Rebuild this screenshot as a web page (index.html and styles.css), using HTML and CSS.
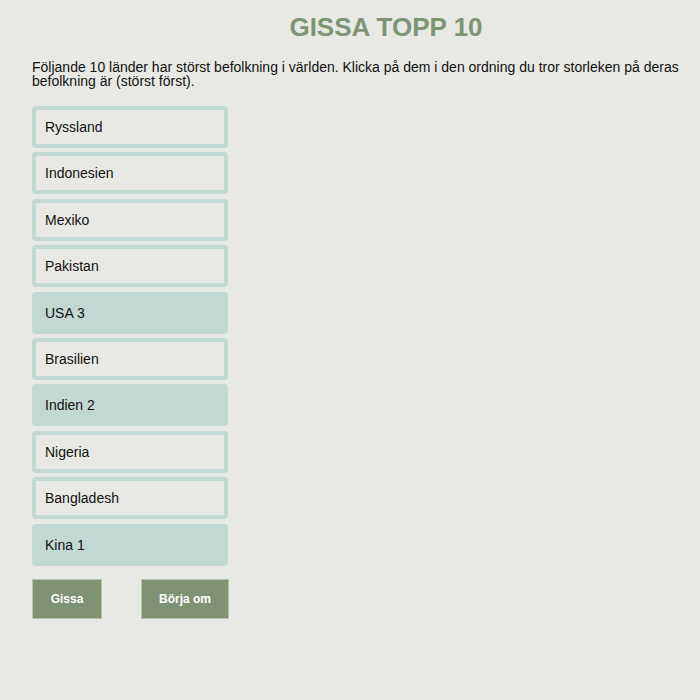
FILE: index.html
```html
<!DOCTYPE html>
<html lang="sv">
<head>
<meta charset="utf-8">
<title>Gissa topp 10</title>
<link rel="stylesheet" href="styles.css">
</head>
<body>
<main class="page">
  <h1 class="title">GISSA TOPP 10</h1>
  <p class="intro">Följande 10 länder har störst befolkning i världen. Klicka på dem i den ordning du tror storleken på deras befolkning är (störst först).</p>
  <ul class="list">
    <li class="item">Ryssland</li>
    <li class="item">Indonesien</li>
    <li class="item">Mexiko</li>
    <li class="item">Pakistan</li>
    <li class="item selected">USA 3</li>
    <li class="item">Brasilien</li>
    <li class="item selected">Indien 2</li>
    <li class="item">Nigeria</li>
    <li class="item">Bangladesh</li>
    <li class="item selected">Kina 1</li>
  </ul>
  <div class="actions">
    <button class="btn btn-guess">Gissa</button>
    <button class="btn btn-reset">Börja om</button>
  </div>
</main>
</body>
</html>
```
FILE: styles.css
```css
html, body {
  margin: 0;
  padding: 0;
  background: #e8e9e4;
}
body {
  font-family: "Liberation Sans", Arial, sans-serif;
  color: #111;
  width: 700px;
  height: 700px;
}
.page {
  padding: 12px 16px 0 32px;
}
.title {
  margin: 0;
  padding-left: 56px;
  text-align: center;
  font-size: 26px;
  line-height: 30px;
  font-weight: bold;
  color: #7f9474;
}
.intro {
  margin: 18px 0 0;
  font-size: 14px;
  line-height: 14px;
}
.list {
  list-style: none;
  margin: 18px 0 0;
  padding: 0;
  width: 196px;
  display: flex;
  flex-direction: column;
  gap: 4.4px;
}
.item {
  box-sizing: border-box;
  height: 42px;
  border: 4px solid #c2d8d3;
  border-radius: 4px;
  padding: 9px 9px;
  font-size: 14px;
  line-height: 16px;
}
.item.selected {
  background: #c2d8d3;
}
.actions {
  display: flex;
  gap: 39px;
  margin-top: 13px;
}
.btn {
  box-sizing: border-box;
  height: 40px;
  background: #7f9273;
  border: 1px solid #b8c2b0;
  color: #fff;
  font-family: "Liberation Sans", Arial, sans-serif;
  font-weight: bold;
  font-size: 12px;
  padding: 0;
}
.btn-guess { width: 70px; }
.btn-reset { width: 88px; }
```
